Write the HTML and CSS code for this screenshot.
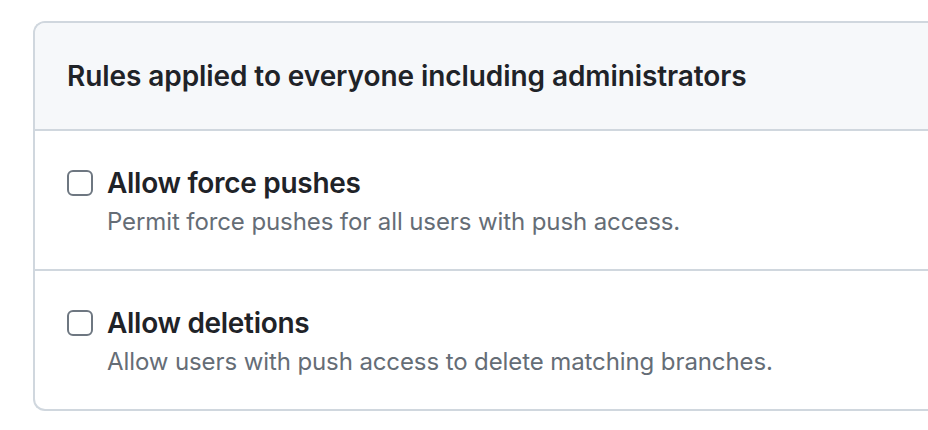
FILE: index.html
```html
<!DOCTYPE html>
<html>
<head>
<meta charset="utf-8">
<link rel="stylesheet" href="styles.css">
</head>
<body>
<div class="box">
  <div class="box-header">
    <h3 class="box-title">Rules applied to everyone including administrators</h3>
  </div>
  <div class="box-row">
    <label class="check">
      <span class="checkbox"></span>
      <span class="check-text">
        <span class="check-title">Allow force pushes</span>
        <span class="check-note">Permit force pushes for all users with push access.</span>
      </span>
    </label>
  </div>
  <div class="box-row">
    <label class="check">
      <span class="checkbox"></span>
      <span class="check-text">
        <span class="check-title">Allow deletions</span>
        <span class="check-note">Allow users with push access to delete matching branches.</span>
      </span>
    </label>
  </div>
</div>
</body>
</html>
```
FILE: styles.css
```css
html, body {
  margin: 0;
  padding: 0;
  background: #ffffff;
}
body {
  font-family: Inter, "Noto Sans", "Liberation Sans", sans-serif;
  color: #1f2328;
  padding: 21px 0 0 33px;
}
.box {
  border: 2px solid #d0d7de;
  border-right: 0;
  border-radius: 12px 0 0 12px;
  background: #ffffff;
  overflow: hidden;
}
.box-header {
  background: #f6f8fa;
  padding: 32px 32px;
  border-bottom: 2px solid #d0d7de;
}
.box-title {
  margin: 0;
  font-size: 28px;
  font-weight: 600;
  line-height: 42px;
  letter-spacing: -0.08px;
  white-space: nowrap;
}
.box-row {
  padding: 32px 32px;
  border-top: 2px solid #d0d7de;
}
.box-header + .box-row {
  border-top: 0;
}
.check {
  display: flex;
  gap: 14px;
  align-items: flex-start;
}
.checkbox {
  flex: none;
  width: 26px;
  height: 26px;
  box-sizing: border-box;
  border: 2px solid #6e7781;
  border-radius: 6px;
  margin-top: 7px;
  background: #fff;
}
.check-text {
  display: flex;
  flex-direction: column;
}
.check-title {
  font-size: 28px;
  font-weight: 600;
  line-height: 41px;
  letter-spacing: -0.3px;
}
.check-note {
  font-size: 24px;
  line-height: 31px;
  margin-top: 2px;
  letter-spacing: -0.1px;
  color: #656d76;
}
```
